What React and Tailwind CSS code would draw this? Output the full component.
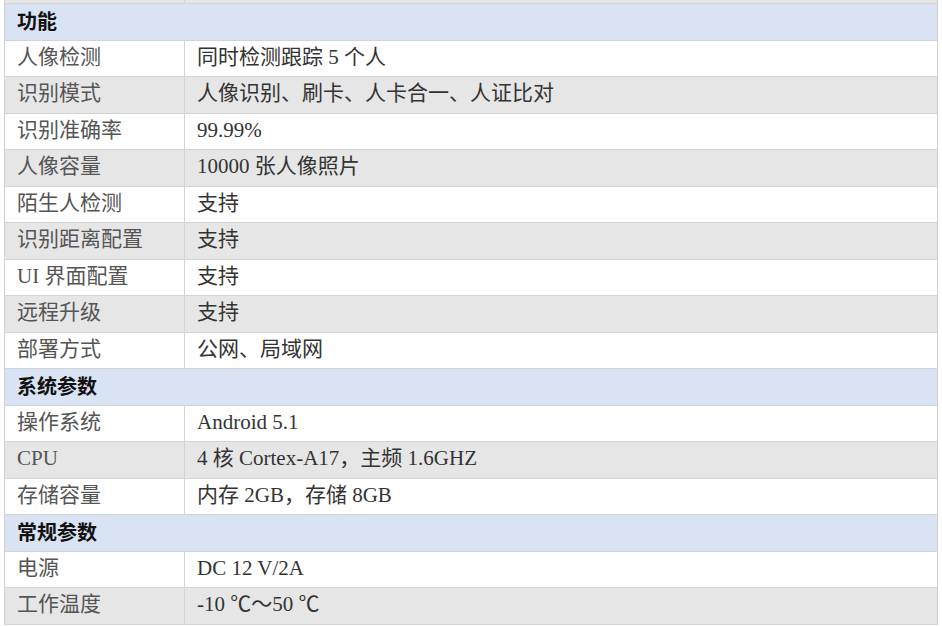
const sections = [
  {
    title: '功能',
    rows: [
      ['人像检测', '同时检测跟踪 5 个人'],
      ['识别模式', '人像识别、刷卡、人卡合一、人证比对'],
      ['识别准确率', '99.99%'],
      ['人像容量', '10000 张人像照片'],
      ['陌生人检测', '支持'],
      ['识别距离配置', '支持'],
      ['UI 界面配置', '支持'],
      ['远程升级', '支持'],
      ['部署方式', '公网、局域网'],
    ],
  },
  {
    title: '系统参数',
    rows: [
      ['操作系统', 'Android 5.1'],
      ['CPU', '4 核 Cortex-A17，主频 1.6GHZ'],
      ['存储容量', '内存 2GB，存储 8GB'],
    ],
  },
  {
    title: '常规参数',
    rows: [
      ['电源', 'DC 12 V/2A'],
      ['工作温度', '-10 ℃～50 ℃'],
    ],
  },
];

const Row = ({ label, value, shaded }) => (
  <div className={`flex h-[36.5px] border-b border-[#d4d4d4] ${shaded ? 'bg-[#e6e6e6]' : 'bg-white'}`}>
    <div className="w-[180px] shrink-0 border-r border-[#d4d4d4] pl-3 pb-[2px] flex items-center text-[#555]">
      {label}
    </div>
    <div className="flex-1 pl-3 pb-[2px] flex items-center text-[#333]">{value}</div>
  </div>
);

const App = () => {
  return (
    <div className="w-[942px] h-[626px] bg-white overflow-hidden">
      <div
        className="ml-1 w-[934px] border-l border-r border-[#d0d0d0] text-[21px] leading-none"
        style={{ fontFamily: '"Liberation Serif", "Noto Sans CJK SC", serif' }}
      >
        <div className="flex h-[4px] bg-[#e6e6e6] border-b border-[#d4d4d4]">
          <div className="w-[180px] border-r border-[#d4d4d4]"></div>
        </div>
        {sections.map((section) => (
          <div key={section.title}>
            <div className="h-[36.5px] bg-[#dae3f3] border-b border-[#d4d4d4] pl-3 pb-[2px] flex items-center">
              <span
                className="font-bold text-[20px] text-[#111]"
                style={{ fontFamily: '"Noto Sans CJK SC", sans-serif' }}
              >
                {section.title}
              </span>
            </div>
            {section.rows.map(([label, value], i) => (
              <Row key={label} label={label} value={value} shaded={i % 2 === 1} />
            ))}
          </div>
        ))}
      </div>
    </div>
  );
};

export default App;
